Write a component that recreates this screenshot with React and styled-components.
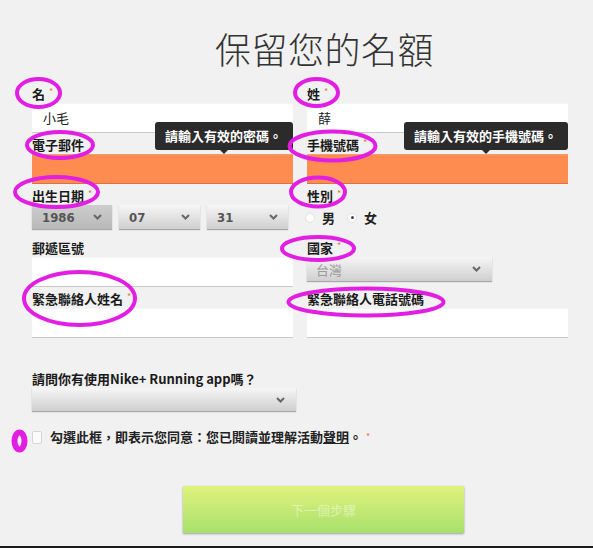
import React from "react";
import styled, { createGlobalStyle } from "styled-components";

const Global = createGlobalStyle`
  html, body { margin: 0; padding: 0; background: #f1f1f1; }
  body { font-family: "Noto Sans CJK TC", "Noto Sans", sans-serif; color: #222; }
  * { box-sizing: border-box; }
`;

const Page = styled.div`
  position: relative;
  width: 593px;
  height: 548px;
  overflow: hidden;
  background: #f1f1f1;
  padding: 26px 0 0 32px;
  border-bottom: 2px solid #1b1b1b;
`;

const Title = styled.h1`
  margin: 0 0 0 183px;
  font-size: 36px;
  line-height: 44px;
  font-weight: 300;
  color: #333;
  letter-spacing: 0.5px;
  font-family: "Noto Sans CJK TC", sans-serif;
`;

const Form = styled.div`
  margin-top: 16px;
  display: grid;
  grid-template-columns: 261px 261px;
  column-gap: 14px;
  row-gap: 4px;
`;

const Field = styled.div`
  position: relative;
  display: flex;
  flex-direction: column;
  margin-bottom: ${(p) => p.$after || 0}px;
`;

const Label = styled.div`
  font-size: 13px;
  line-height: 16px;
  font-weight: 700;
  color: #1a1a1a;
  margin-bottom: 1px;
  white-space: nowrap;
`;

const Req = styled.span`
  color: #e07a48;
  font-size: 9px;
  font-weight: 400;
  vertical-align: top;
  margin-left: 4px;
  line-height: 12px;
`;

const Input = styled.div`
  height: 30px;
  background: ${(p) => (p.$error ? "#fe8c50" : "#ffffff")};
  border-bottom: 1px solid ${(p) => (p.$error ? "#d87440" : "#c9c9c9")};
  border-top: 1px solid ${(p) => (p.$error ? "#f0a070" : "#f4f4f4")};
  font-size: 13px;
  line-height: 28px;
  padding-left: 11px;
  color: #222;
`;

const Tooltip = styled.div`
  position: absolute;
  right: 0;
  top: -15px;
  height: 28px;
  padding: 0 11px 0 10px;
  background: #2b2b2b;
  border-radius: 3px;
  color: #fff;
  font-size: 13px;
  font-weight: 700;
  line-height: 28px;
  white-space: nowrap;
  z-index: 2;
  &::after {
    content: "";
    position: absolute;
    left: 50%;
    bottom: -4px;
    margin-left: -4px;
    border-left: 4px solid transparent;
    border-right: 4px solid transparent;
    border-top: 4px solid #2b2b2b;
  }
`;

const SelectRow = styled.div`
  display: flex;
  gap: 7px;
`;

const Select = styled.div`
  position: relative;
  width: ${(p) => p.$w}px;
  height: ${(p) => p.$h || 24}px;
  background: ${(p) =>
    p.$dark
      ? "linear-gradient(#cdcdcd, #b9b9b9)"
      : "linear-gradient(#f6f6f6, #cfcfcf)"};
  box-shadow: 0 1px 1px rgba(0, 0, 0, 0.3);
  display: flex;
  align-items: center;
  padding-left: ${(p) => p.$pl || 9}px;
  font-family: ${(p) =>
    p.$num
      ? `"DejaVu Sans Condensed", "Liberation Sans Narrow", sans-serif`
      : `"Noto Sans CJK TC", sans-serif`};
  font-stretch: ${(p) => (p.$num ? "condensed" : "normal")};
  font-weight: ${(p) => (p.$num ? 700 : 400)};
  font-size: 13px;
  color: ${(p) => (p.$num ? "#555" : "#9a9a9a")};
`;

const Chevron = styled.svg`
  position: absolute;
  right: ${(p) => p.$r || 12}px;
  top: 50%;
  margin-top: -3px;
`;

const Arrow = ({ r }) => (
  <Chevron $r={r} width="9" height="6" viewBox="0 0 9 6">
    <polyline points="1,1 4.5,4.5 8,1" fill="none" stroke="#666" strokeWidth="2" />
  </Chevron>
);

const RadioRow = styled.div`
  display: flex;
  align-items: center;
  height: 24px;
  padding-top: 1px;
  font-size: 13px;
  font-weight: 700;
`;

const Radio = styled.span`
  width: 10px;
  height: 10px;
  border-radius: 50%;
  background: #fff;
  border: 1px solid #e2e2e2;
  margin: 0 ${(p) => p.$mr}px 0 ${(p) => p.$ml}px;
  display: inline-flex;
  align-items: center;
  justify-content: center;
  &::after {
    content: "";
    width: 3px;
    height: 3px;
    border-radius: 50%;
    background: ${(p) => (p.$on ? "#444" : "transparent")};
  }
`;

const Question = styled.div`
  margin-top: 33px;
  display: flex;
  flex-direction: column;
  width: 264px;
`;

const CheckRow = styled.div`
  margin-top: 18px;
  display: flex;
  align-items: center;
  height: 16px;
  font-size: 13px;
  font-weight: 700;
  line-height: 16px;
`;

const Box = styled.span`
  width: 10px;
  height: 13px;
  background: #fbfbfb;
  border: 1px solid #d6d6d6;
  border-radius: 2px;
  margin: 0 8px 0 0;
`;

const Link = styled.span`
  text-decoration: underline;
`;

const Submit = styled.div`
  margin: 41px 0 0 151px;
  width: 281px;
  height: 47px;
  background: linear-gradient(#e1f27d, #a7e06c);
  box-shadow: 0 1px 2px rgba(0, 0, 0, 0.35);
  display: flex;
  align-items: center;
  justify-content: center;
  color: rgba(255, 255, 255, 0.45);
  font-size: 13px;
`;

const Marks = styled.svg`
  position: absolute;
  left: 0;
  top: 0;
  pointer-events: none;
  z-index: 5;
`;

const marks = [
  [38.5, 93, 21.5, 14],
  [316.5, 92.5, 21.5, 13.5],
  [60, 145, 33, 13],
  [332.5, 146, 43, 14.5],
  [56.5, 192, 41.5, 15],
  [318, 192, 27, 14.5],
  [318, 248.5, 36, 11.5],
  [79.5, 298.5, 55.5, 26.5],
  [366, 302, 77.5, 13.5],
];

export default function App() {
  return (
    <>
      <Global />
      <Page>
        <Title>保留您的名額</Title>
        <Form>
          <Field>
            <Label>名<Req>*</Req></Label>
            <Input>小毛</Input>
          </Field>
          <Field>
            <Label>姓<Req>*</Req></Label>
            <Input>薛</Input>
          </Field>

          <Field>
            <Label>電子郵件<Req>*</Req></Label>
            <Input $error />
            <Tooltip>請輸入有效的密碼。</Tooltip>
          </Field>
          <Field>
            <Label>手機號碼<Req>*</Req></Label>
            <Input $error />
            <Tooltip>請輸入有效的手機號碼。</Tooltip>
          </Field>

          <Field $after={7}>
            <Label>出生日期<Req>*</Req></Label>
            <SelectRow>
              <Select $w={80} $num $dark $pl={10}>1986<Arrow r={10} /></Select>
              <Select $w={81} $num $pl={10}>07<Arrow r={10} /></Select>
              <Select $w={81} $num $pl={10}>31<Arrow r={10} /></Select>
            </SelectRow>
          </Field>
          <Field $after={7}>
            <Label>性別<Req>*</Req></Label>
            <RadioRow>
              <Radio $ml={-2} $mr={7} />男
              <Radio $ml={12} $mr={7} $on />女
            </RadioRow>
          </Field>

          <Field>
            <Label>郵遞區號</Label>
            <Input />
          </Field>
          <Field>
            <Label>國家<Req>*</Req></Label>
            <Select $w={185} $pl={9}>台灣<Arrow r={11} /></Select>
          </Field>

          <Field>
            <Label>緊急聯絡人姓名<Req>*</Req></Label>
            <Input />
          </Field>
          <Field>
            <Label>緊急聯絡人電話號碼<Req>*</Req></Label>
            <Input />
          </Field>
        </Form>

        <Question>
          <Label>請問你有使用Nike+ Running app嗎？</Label>
          <Select $w={264} $h={23}><Arrow r={11} /></Select>
        </Question>

        <CheckRow>
          <Box />
          勾選此框，即表示您同意：您已閱讀並理解活動<Link>聲明</Link>。<Req>*</Req>
        </CheckRow>

        <Submit>下一個步驟</Submit>

        <Marks width="593" height="548" viewBox="0 0 593 548">
          {marks.map(([cx, cy, rx, ry], i) => (
            <ellipse key={i} cx={cx} cy={cy} rx={rx} ry={ry} fill="none" stroke="#e21ee2" strokeWidth="4" />
          ))}
          <ellipse cx="19.5" cy="441" rx="5" ry="8.5" fill="none" stroke="#e21ee2" strokeWidth="6" />
        </Marks>
      </Page>
    </>
  );
}
